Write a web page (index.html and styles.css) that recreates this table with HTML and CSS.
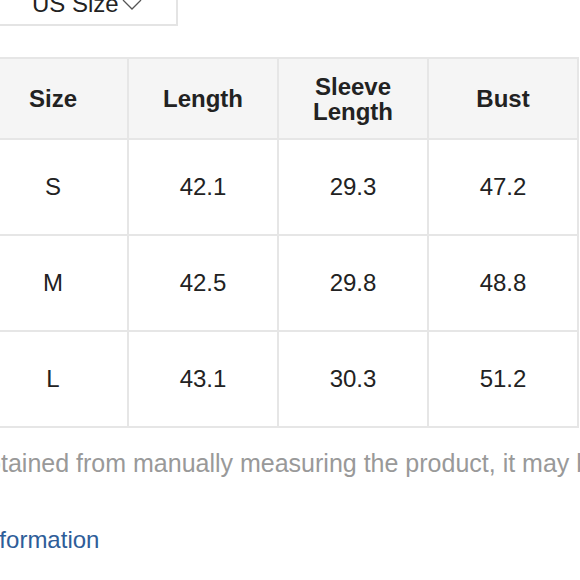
FILE: index.html
```html
<!DOCTYPE html>
<html lang="en">
<head>
<meta charset="utf-8">
<title>Size chart</title>
<link rel="stylesheet" href="styles.css">
</head>
<body>
<div class="page">
  <div class="size-select">
    <span class="size-select__label">US Size</span>
    <svg class="size-select__chevron" width="20" height="11" viewBox="0 0 20 11" aria-hidden="true">
      <polyline points="1,1 10,10 19,1" fill="none" stroke="#555" stroke-width="1.3"/>
    </svg>
  </div>

  <table class="size-table">
    <thead>
      <tr>
        <th>Size</th>
        <th>Length</th>
        <th>Sleeve<br>Length</th>
        <th>Bust</th>
      </tr>
    </thead>
    <tbody>
      <tr><td>S</td><td>42.1</td><td>29.3</td><td>47.2</td></tr>
      <tr><td>M</td><td>42.5</td><td>29.8</td><td>48.8</td></tr>
      <tr><td>L</td><td>43.1</td><td>30.3</td><td>51.2</td></tr>
    </tbody>
  </table>

  <p class="note">This data was obtained from manually measuring the product, it may be off by 1-2 CM.</p>
  <a class="info-link" href="#">Size Information</a>
</div>
</body>
</html>
```

FILE: styles.css
```css
html, body {
  margin: 0;
  padding: 0;
  overflow: hidden;
  background: #fff;
}

body {
  font-family: "Liberation Sans", Arial, sans-serif;
  color: #222;
}

.page {
  margin-left: -23px;
  width: 640px;
}

.size-select {
  display: flex;
  align-items: center;
  width: 144px;
  height: 40px;
  margin-top: -18px;
  padding-left: 53px;
  border: 2px solid #e4e4e4;
  font-size: 24px;
  line-height: 40px;
  color: #222;
}

.size-select__chevron {
  margin-left: 3px;
  margin-top: 1px;
}

.size-table {
  margin-top: 31px;
  border-collapse: collapse;
  width: 602px;
  table-layout: fixed;
}

.size-table th,
.size-table td {
  border: 2px solid #e6e6e6;
  text-align: center;
  padding: 0;
  font-size: 24px;
}

.size-table th {
  background: #f5f5f5;
  font-weight: bold;
  height: 79px;
  line-height: 25px;
  color: #222;
}

.size-table td {
  height: 94px;
  color: #222;
}

.note {
  margin: 21px 0 0 -165px;
  white-space: nowrap;
  font-size: 25px;
  line-height: 28px;
  color: #999;
}

.info-link {
  display: block;
  margin: 49px 0 0 -51px;
  font-size: 24px;
  line-height: 28px;
  color: #2e5d99;
  text-decoration: none;
}
```
